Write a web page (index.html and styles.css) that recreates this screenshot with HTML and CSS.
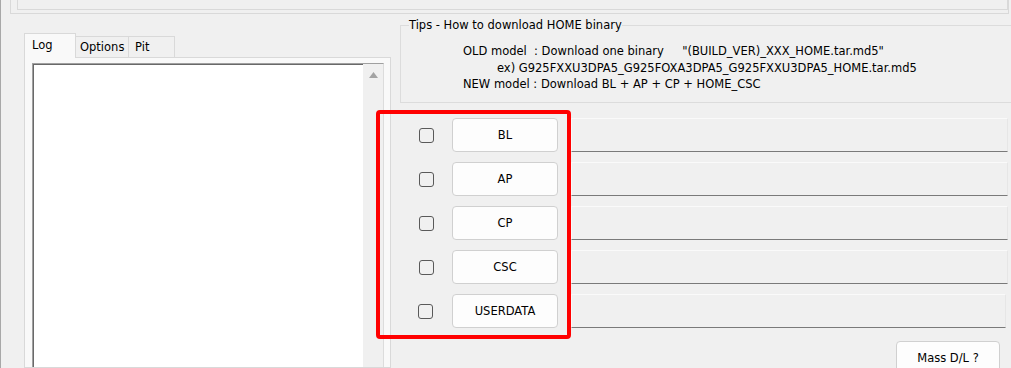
FILE: index.html
```html
<!DOCTYPE html>
<html>
<head>
<meta charset="utf-8">
<link rel="stylesheet" href="styles.css">
</head>
<body>
<div class="app">
  <div class="top-outer"><div class="top-inner"></div></div>
  <div class="main">
    <div class="left">
      <div class="tabs">
        <div class="tab tab-active">Log</div>
        <div class="tab tab-options">Options</div>
        <div class="tab tab-pit">Pit</div>
        <div class="tab-fill"></div>
      </div>
      <div class="pane">
        <div class="log">
          <div class="log-body"></div>
          <div class="scroll">
            <svg class="arrow" width="9" height="6" viewBox="0 0 9 6"><polygon points="4.5,0 9,6 0,6" fill="#a3a3a3"/></svg>
          </div>
        </div>
      </div>
    </div>
    <div class="right">
      <div class="tips">
        <div class="tips-title">Tips - How to download HOME binary</div>
        <div class="tips-text">
          <div class="line l-old">OLD model  : Download one binary     "(BUILD_VER)_XXX_HOME.tar.md5"</div>
          <div class="line l-ex">ex) G925FXXU3DPA5_G925FOXA3DPA5_G925FXXU3DPA5_HOME.tar.md5</div>
          <div class="line l-new">NEW model : Download BL + AP + CP + HOME_CSC</div>
        </div>
      </div>
      <div class="rows">
        <div class="row"><span class="check"></span><div class="btn">BL</div><div class="field"></div></div>
        <div class="row"><span class="check"></span><div class="btn">AP</div><div class="field"></div></div>
        <div class="row"><span class="check"></span><div class="btn">CP</div><div class="field"></div></div>
        <div class="row"><span class="check"></span><div class="btn">CSC</div><div class="field"></div></div>
        <div class="row"><span class="check check-ud"></span><div class="btn">USERDATA</div><div class="field field-last"></div></div>
      </div>
      <div class="mass-row"><div class="btn btn-mass">Mass D/L ?</div></div>
    </div>
  </div>
  <div class="highlight"></div>
</div>
</body>
</html>
```

FILE: styles.css
```css
* { box-sizing: border-box; }
html, body { margin: 0; padding: 0; }
body {
  background: #f0f0f0;
  font-family: "DejaVu Sans", "Noto Sans", sans-serif;
  font-size: 11.5px;
  color: #000;
}
.app {
  position: relative;
  width: 1011px;
  height: 368px;
  overflow: hidden;
  border-left: 1px solid #a8a8a8;
  background: #f0f0f0;
}
.top-outer {
  margin-left: 9px;
  width: 999px;
  height: 14px;
  border: 1px solid #d9d9d9;
  border-top: none;
}
.top-inner {
  margin-left: 6px;
  width: 991px;
  height: 10px;
  border: 1px solid #d9d9d9;
  border-top: none;
}
.main {
  display: flex;
  height: 354px;
}
.left {
  width: 390px;
  flex: none;
  padding-left: 23px;
  padding-top: 19px;
  display: flex;
  flex-direction: column;
}
.tabs {
  display: flex;
  align-items: flex-end;
  height: 25px;
  flex: none;
}
.tab {
  border: 1px solid #d9d9d9;
  line-height: 20px;
  white-space: nowrap;
}
.tab-active {
  width: 52px;
  height: 25px;
  border-bottom: none;
  background: #f9f9f9;
  padding-left: 7px;
  padding-top: 1px;
}
.tab-options {
  width: 53px;
  height: 22px;
  border-left: none;
  background: #f0f0f0;
  padding-left: 4px;
}
.tab-pit {
  width: 46px;
  height: 22px;
  border-left: none;
  background: #f0f0f0;
  padding-left: 6px;
}
.tab-fill {
  flex: 1;
  height: 1px;
  border-bottom: 1px solid #d9d9d9;
}
.pane {
  flex: 1;
  border: 1px solid #d9d9d9;
  border-top: none;
  background: #f9f9f9;
  padding: 5px 6px 0 7px;
  display: flex;
}
.log {
  flex: 1;
  display: flex;
  border-top: 1px solid #a0a0a0;
  border-left: 1px solid #a0a0a0;
  border-right: 1px solid #dcdcdc;
  box-shadow: inset 1px 1px 0 #696969;
  background: #fff;
}
.log-body { flex: 1; }
.scroll {
  width: 20px;
  flex: none;
  background: #f0f0f0;
  display: flex;
  justify-content: center;
  align-items: flex-start;
  padding-top: 8px;
}
.arrow { display: block; }
.right {
  flex: 1;
  padding-left: 9px;
  display: flex;
  flex-direction: column;
}
.tips {
  margin-top: 11px;
  margin-right: -20px;
  height: 78px;
  border: 1px solid #dcdcdc;
  flex: none;
}
.tips-title {
  display: inline-block;
  margin-top: -9px;
  margin-left: 8px;
  line-height: 16px;
  background: #f0f0f0;
  vertical-align: top;
}
.tips-text {
  margin-top: 3px;
}
.line {
  white-space: pre;
  line-height: 16.5px;
}
.l-old, .l-new { padding-left: 62px; }
.l-ex { padding-left: 96px; }
.rows {
  margin-top: 15px;
  display: flex;
  flex-direction: column;
  gap: 10px;
}
.row {
  display: flex;
  align-items: center;
  height: 34px;
  padding-left: 19px;
}
.check {
  width: 15px;
  height: 15px;
  flex: none;
  border: 1px solid #595959;
  border-radius: 3px;
  background: #f0f0f0;
}
.check-ud { margin-left: -1px; margin-right: 1px; }
.btn {
  width: 106px;
  height: 34px;
  flex: none;
  margin-left: 18px;
  background: #fdfdfd;
  border: 1px solid #d0d0d0;
  border-radius: 4px;
  display: flex;
  align-items: center;
  justify-content: center;
  line-height: 16px;
}
.field {
  flex: 1;
  height: 34px;
  margin-left: 13px;
  margin-right: 3px;
  background: #f0f0f0;
  border: 1px solid #e6e6e6;
  border-top-color: #fafafa;
  border-left-color: #fafafa;
  border-bottom: 1px solid #7a7a7a;
}
.field-last { margin-right: 5px; }
.mass-row {
  margin-top: 13px;
  display: flex;
  justify-content: flex-end;
  padding-right: 11px;
}
.btn-mass {
  width: 104px;
  margin-left: 0;
}
.highlight {
  position: absolute;
  left: 375px;
  top: 110px;
  width: 195px;
  height: 229px;
  border: 4px solid #ff0000;
  border-radius: 4px;
  pointer-events: none;
}
```
